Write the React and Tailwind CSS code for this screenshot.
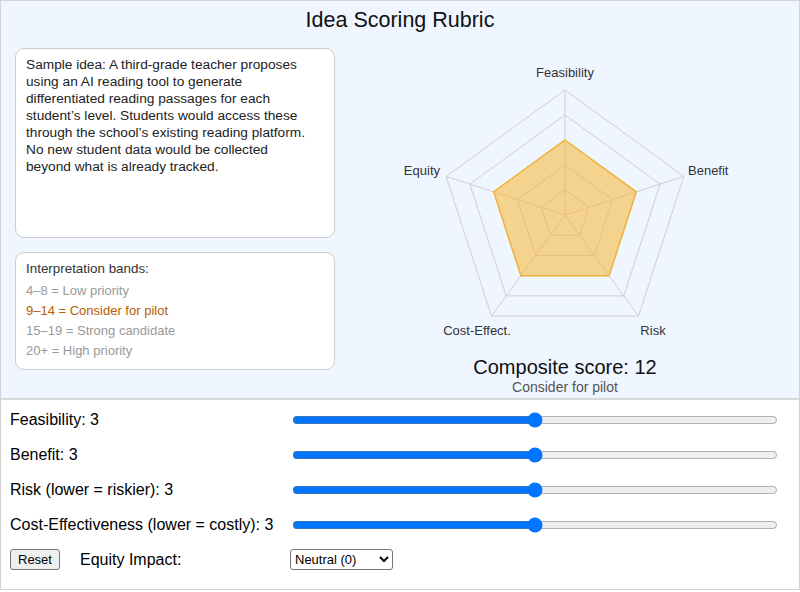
import { useState } from "react";

const AXES = ["Feasibility", "Benefit", "Risk", "Cost-Effect.", "Equity"];

const BANDS = [
  { min: 4, max: 8, label: "4–8 = Low priority", name: "Low priority" },
  { min: 9, max: 14, label: "9–14 = Consider for pilot", name: "Consider for pilot" },
  { min: 15, max: 19, label: "15–19 = Strong candidate", name: "Strong candidate" },
  { min: 20, max: 99, label: "20+ = High priority", name: "High priority" },
];

function point(i, r, cx, cy) {
  const a = -Math.PI / 2 + (i * 2 * Math.PI) / 5;
  return [cx + r * Math.cos(a), cy + r * Math.sin(a)];
}

function ring(r, cx, cy) {
  return [0, 1, 2, 3, 4]
    .map((i) => point(i, r, cx, cy).map((v) => v.toFixed(1)).join(","))
    .join(" ");
}

function Radar({ values }) {
  const cx = 220;
  const cy = 167;
  const step = 25;

  const data = values
    .map((v, i) => point(i, v * step, cx, cy).map((n) => n.toFixed(1)).join(","))
    .join(" ");

  return (
    <svg width="440" height="300" className="block">
      {[1, 2, 3, 4, 5].map((k) => (
        <polygon
          key={k}
          points={ring(k * step, cx, cy)}
          fill="none"
          stroke="#cfcfcf"
          strokeWidth="1"
        />
      ))}
      {[0, 1, 2, 3, 4].map((i) => {
        const [x, y] = point(i, 125, cx, cy);
        return (
          <line key={i} x1={cx} y1={cy} x2={x} y2={y} stroke="#cfcfcf" strokeWidth="1" />
        );
      })}
      <polygon
        points={data}
        fill="#f7b733"
        fillOpacity="0.55"
        stroke="#f0b43c"
        strokeWidth="1.5"
      />
      <g fontSize="13" fill="#333" fontFamily="'Liberation Sans', Arial, sans-serif">
        <text x="220" y="29" textAnchor="middle">{AXES[0]}</text>
        <text x="343" y="127" textAnchor="start">{AXES[1]}</text>
        <text x="308" y="287" textAnchor="middle">{AXES[2]}</text>
        <text x="132" y="287" textAnchor="middle">{AXES[3]}</text>
        <text x="95" y="127" textAnchor="end">{AXES[4]}</text>
      </g>
    </svg>
  );
}

function SliderRow({ label, value, onChange }) {
  return (
    <div className="flex items-center h-[25px]">
      <div className="w-[280px] shrink-0 text-[16px] text-black">
        {label}: {value}
      </div>
      <input
        type="range"
        min="1"
        max="5"
        step="1"
        value={value}
        onChange={(e) => onChange(Number(e.target.value))}
        className="w-[486px] ml-[2px] my-0"
      />
    </div>
  );
}

export default function App() {
  const [feas, setFeas] = useState(3);
  const [benefit, setBenefit] = useState(3);
  const [risk, setRisk] = useState(3);
  const [cost, setCost] = useState(3);
  const [equity, setEquity] = useState(0);

  const total = feas + benefit + risk + cost + equity;
  const band = BANDS.find((b) => total >= b.min && total <= b.max) || BANDS[0];

  const reset = () => {
    setFeas(3);
    setBenefit(3);
    setRisk(3);
    setCost(3);
    setEquity(0);
  };

  return (
    <div
      className="w-[800px] h-[590px] border border-[#d4d4d4] bg-white flex flex-col overflow-hidden"
      style={{ fontFamily: "'Liberation Sans', Arial, Helvetica, sans-serif" }}
    >
      {/* Top panel */}
      <div className="h-[399px] shrink-0 bg-[#eff6ff] border-b-2 border-[#d9d9d9] flex flex-col">
        <h1 className="text-center text-[21.5px] leading-[26px] text-[#111] pt-[6px]">
          Idea Scoring Rubric
        </h1>

        <div className="flex gap-[10px] px-[14px] pt-[15px]">
          {/* Left column */}
          <div className="w-[320px] shrink-0 flex flex-col gap-[14px]">
            <div className="h-[190px] bg-white border border-[#cccccc] rounded-[9px] pl-[10px] pr-[26px] py-[7px] text-[13.7px] leading-[17px] text-[#222]">
              Sample idea: A third-grade teacher proposes using an AI reading tool to generate
              differentiated reading passages for each student’s level. Students would access
              these through the school’s existing reading platform. No new student data would be
              collected beyond what is already tracked.
            </div>

            <div className="h-[118px] bg-white border border-[#cccccc] rounded-[9px] px-[10px] pt-[6px] text-[13px] leading-[20px]">
              <div className="text-[#333] text-[13.4px] mb-[2px]">Interpretation bands:</div>
              {BANDS.map((b) => (
                <div
                  key={b.label}
                  className={b === band ? "text-[#b85c00]" : "text-[#999]"}
                >
                  {b.label}
                </div>
              ))}
            </div>
          </div>

          {/* Right column */}
          <div className="w-[440px] flex flex-col items-center">
            <Radar values={[feas, benefit, risk, cost, equity + 3]} />
            <div className="mt-[8px] text-[20px] leading-[23px] text-[#111]">
              Composite score: {total}
            </div>
            <div className="text-[14px] leading-[17px] text-[#555]">{band.name}</div>
          </div>
        </div>
      </div>

      {/* Controls */}
      <div className="flex flex-col gap-[10px] px-[9px] pt-[7px]">
        <SliderRow label="Feasibility" value={feas} onChange={setFeas} />
        <SliderRow label="Benefit" value={benefit} onChange={setBenefit} />
        <SliderRow label="Risk (lower = riskier)" value={risk} onChange={setRisk} />
        <SliderRow label="Cost-Effectiveness (lower = costly)" value={cost} onChange={setCost} />

        <div className="flex items-center h-[25px]">
          <div className="w-[280px] shrink-0 flex items-center">
            <button
              onClick={reset}
              className="h-[21px] px-[7px] text-[13px] bg-[#efefef] border border-[#767676] rounded-[3px] text-black"
            >
              Reset
            </button>
            <span className="ml-[20px] text-[16px] text-black">Equity Impact:</span>
          </div>
          <select
            value={equity}
            onChange={(e) => setEquity(Number(e.target.value))}
            className="h-[21px] w-[103px] text-[13px] bg-white border border-[#767676] rounded-[3px] text-black"
          >
            <option value={-2}>Harmful (-2)</option>
            <option value={-1}>Some risk (-1)</option>
            <option value={0}>Neutral (0)</option>
            <option value={1}>Positive (+1)</option>
            <option value={2}>Strong (+2)</option>
          </select>
        </div>
      </div>
    </div>
  );
}
